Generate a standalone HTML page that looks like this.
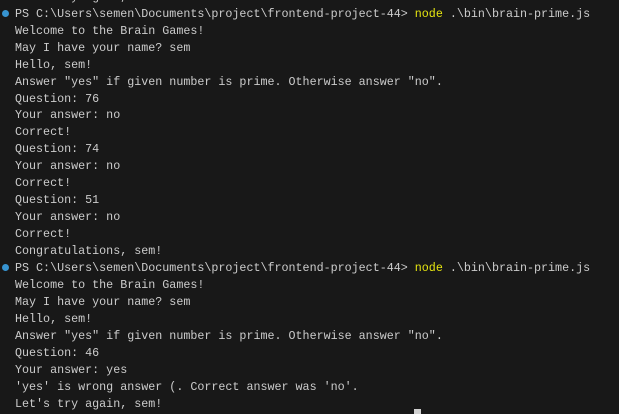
<!DOCTYPE html>
<html><head><meta charset="utf-8"><style>
html,body{margin:0;padding:0;background:#181818;width:619px;height:414px;overflow:hidden}
#t{position:absolute;left:15px;top:-11.2px;font-family:"Liberation Mono",monospace;font-size:11.7px;line-height:16.96px;color:#cccccc;white-space:pre}
.y{color:#e5e510}
.dot{position:absolute;left:2px;width:7px;height:7px;border-radius:50%;background:#3794d1}
.cur{position:absolute;left:414px;top:409px;width:7px;height:5px;background:#d0d0d0}
</style></head><body>
<div class="dot" style="top:10px"></div>
<div class="dot" style="top:264px"></div>
<div class="cur"></div>
<div id="t">Let's try again, sem!
PS C:\Users\semen\Documents\project\frontend-project-44&gt; <span class="y">node</span> .\bin\brain-prime.js
Welcome to the Brain Games!
May I have your name? sem
Hello, sem!
Answer "yes" if given number is prime. Otherwise answer "no".
Question: 76
Your answer: no
Correct!
Question: 74
Your answer: no
Correct!
Question: 51
Your answer: no
Correct!
Congratulations, sem!
PS C:\Users\semen\Documents\project\frontend-project-44&gt; <span class="y">node</span> .\bin\brain-prime.js
Welcome to the Brain Games!
May I have your name? sem
Hello, sem!
Answer "yes" if given number is prime. Otherwise answer "no".
Question: 46
Your answer: yes
'yes' is wrong answer (. Correct answer was 'no'.
Let's try again, sem!</div>
</body></html>
